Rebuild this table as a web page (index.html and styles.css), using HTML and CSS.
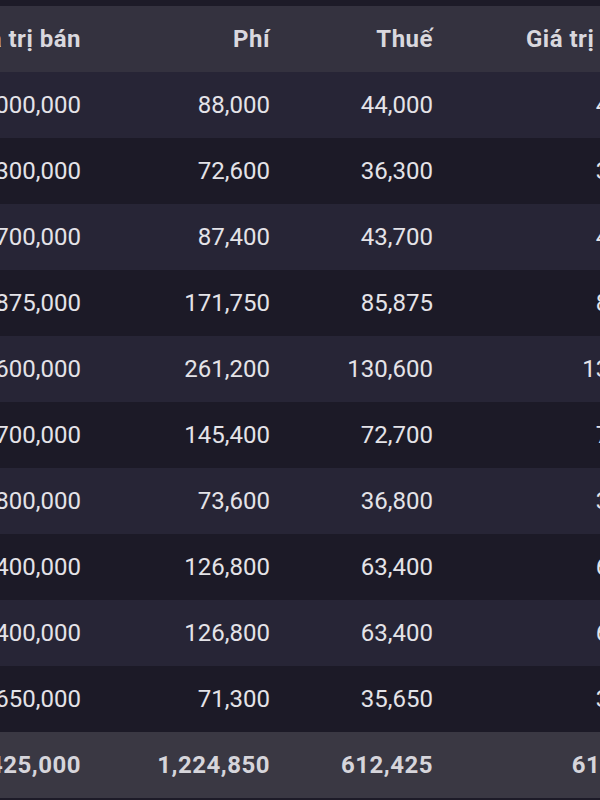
FILE: index.html
```html
<!DOCTYPE html>
<html lang="vi">
<head>
    <meta charset="UTF-8">
    <meta name="viewport" content="width=device-width, initial-scale=1.0">
    <title>Lịch sử bán</title>
    <link rel="stylesheet" href="styles.css">
</head>
<body>
<div id="bangCuon" class="bang-cuon">
    <table class="bang">
        <thead>
            <tr>
                <th class="cot-gtban">Giá trị bán</th>
                <th class="cot-phi">Phí</th>
                <th class="cot-thue">Thuế</th>
                <th class="cot-nhan">Giá trị thực nhận</th>
            </tr>
        </thead>
        <tbody>
            <tr><td>44,000,000</td><td>88,000</td><td>44,000</td><td>43,868,000</td></tr>
            <tr><td>36,300,000</td><td>72,600</td><td>36,300</td><td>36,191,100</td></tr>
            <tr><td>43,700,000</td><td>87,400</td><td>43,700</td><td>43,568,900</td></tr>
            <tr><td>85,875,000</td><td>171,750</td><td>85,875</td><td>85,617,375</td></tr>
            <tr><td>130,600,000</td><td>261,200</td><td>130,600</td><td>130,208,200</td></tr>
            <tr><td>72,700,000</td><td>145,400</td><td>72,700</td><td>72,481,900</td></tr>
            <tr><td>36,800,000</td><td>73,600</td><td>36,800</td><td>36,689,600</td></tr>
            <tr><td>63,400,000</td><td>126,800</td><td>63,400</td><td>63,209,800</td></tr>
            <tr><td>63,400,000</td><td>126,800</td><td>63,400</td><td>63,209,800</td></tr>
            <tr><td>35,650,000</td><td>71,300</td><td>35,650</td><td>35,543,050</td></tr>
        </tbody>
        <tfoot>
            <tr><td>612,425,000</td><td>1,224,850</td><td>612,425</td><td>610,587,725</td></tr>
        </tfoot>
    </table>
</div>

<script>
    // Bảng đang được cuộn ngang sang phải
    document.getElementById('bangCuon').scrollLeft = 103;
</script>
</body>
</html>
```

FILE: styles.css
```css
body {
    font-family: Roboto, "Liberation Sans", sans-serif;
    background-color: #1d1b28;
    color: #e4e3e8;
    margin: 0;
    padding: 6px 0 0 0;
}
.bang-cuon {
    width: 600px;
    overflow-x: auto;
    scrollbar-width: none;
}
.bang {
    border-collapse: collapse;
    table-layout: fixed;
    width: 832px;
    font-size: 24px;
}
.cot-gtban {
    width: 200px;
}
.cot-phi {
    width: 189px;
}
.cot-thue {
    width: 163px;
}
.cot-nhan {
    width: 280px;
}
th, td {
    height: 66px;
    padding: 0 16px 0 0;
    text-align: right;
    white-space: nowrap;
    box-sizing: border-box;
}
th {
    font-weight: bold;
    letter-spacing: 0.5px;
    color: #d9d8de;
    background-color: #34323f;
}
tbody tr:nth-child(odd) {
    background-color: #272536;
}
tbody tr:nth-child(even) {
    background-color: #1c1a27;
}
tfoot td {
    font-weight: bold;
    letter-spacing: 0.5px;
    color: #d6d5db;
    background-color: #3a3843;
}
```
